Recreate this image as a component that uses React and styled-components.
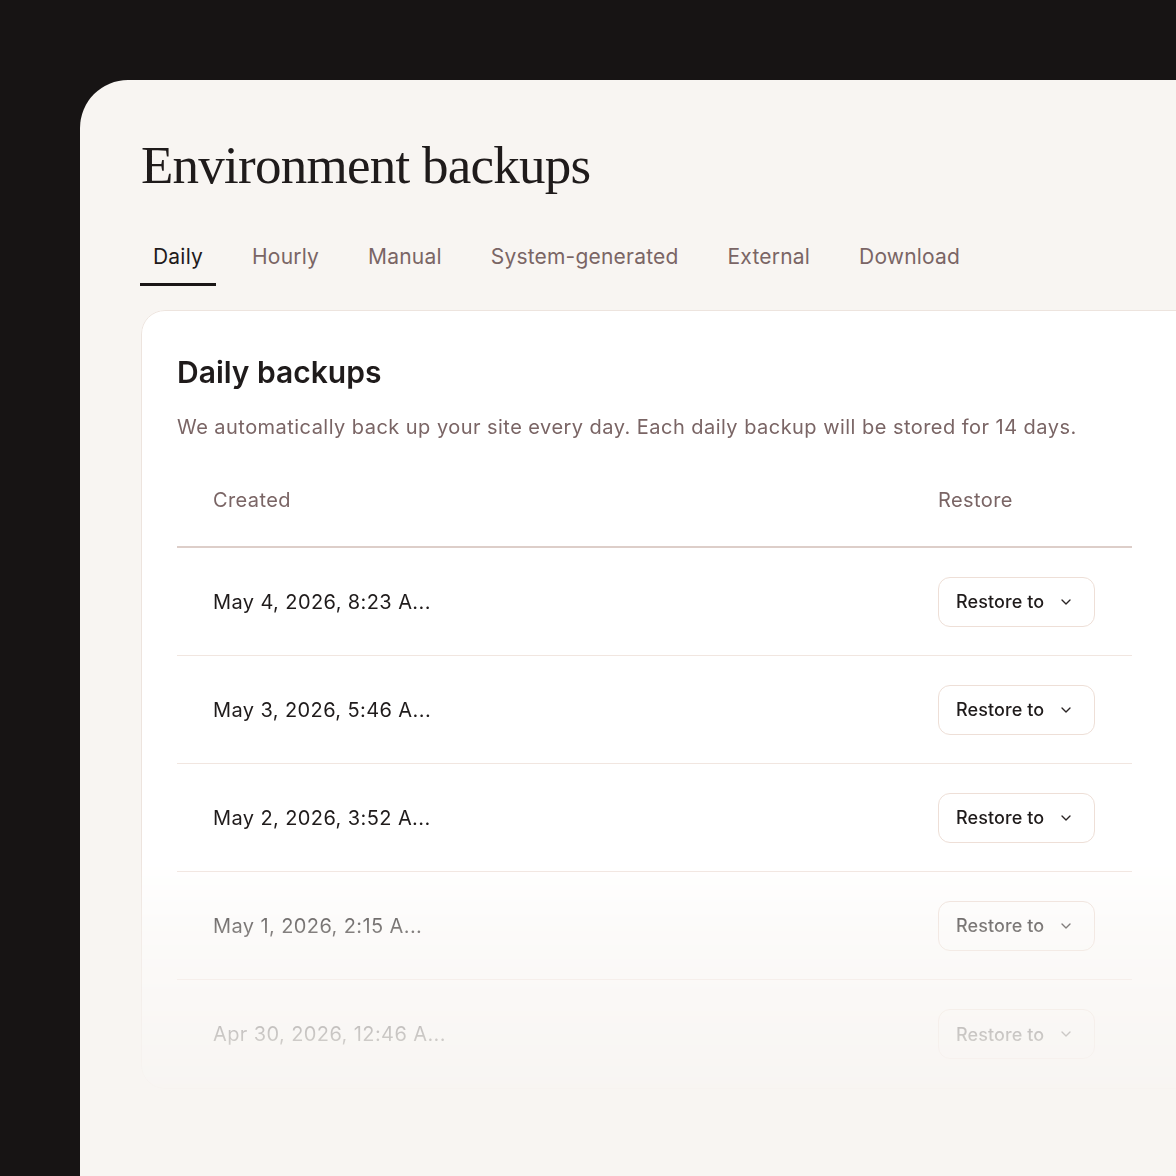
import React from 'react';
import styled, { createGlobalStyle } from 'styled-components';
import { ChevronDown } from 'lucide-react';

const tabs = ['Daily', 'Hourly', 'Manual', 'System-generated', 'External', 'Download'];

const backups = [
  'May 4, 2026, 8:23 A...',
  'May 3, 2026, 5:46 A...',
  'May 2, 2026, 3:52 A...',
  'May 1, 2026, 2:15 A...',
  'Apr 30, 2026, 12:46 A...',
];

const App = () => {
  return (
    <>
      <GlobalStyle />
      <Panel>
        <PageTitle>Environment backups</PageTitle>

        <TabList>
          {tabs.map((tab, i) => (
            <Tab key={tab} $active={i === 0}>{tab}</Tab>
          ))}
        </TabList>

        <Card>
          <CardTitle>Daily backups</CardTitle>
          <CardText>
            We automatically back up your site every day. Each daily backup will be stored for 14 days.
          </CardText>

          <Table>
            <HeadRow>
              <HeadCell>Created</HeadCell>
              <HeadCell>Restore</HeadCell>
            </HeadRow>
            {backups.map((date) => (
              <Row key={date}>
                <DateCell>{date}</DateCell>
                <Cell>
                  <RestoreButton type="button">
                    Restore to <ChevronDown size={16} strokeWidth={2} />
                  </RestoreButton>
                </Cell>
              </Row>
            ))}
          </Table>
        </Card>
      </Panel>
    </>
  );
};

export default App;

const GlobalStyle = createGlobalStyle`
  html, body { margin: 0; padding: 0; }
  body {
    background: #171414;
    font-family: Inter, "Noto Sans", sans-serif;
    overflow: hidden;
  }
`;

const Panel = styled.div`
  margin: 80px 0 0 80px;
  height: 1096px;
  background: #f8f5f2;
  border-top-left-radius: 48px;
  padding: 54px 0 0 61px;
  box-sizing: border-box;
  overflow: hidden;
`;

const PageTitle = styled.h1`
  margin: 0;
  font-family: "Liberation Serif", "DejaVu Serif", serif;
  font-weight: 400;
  font-size: 53px;
  line-height: 62px;
  letter-spacing: -0.75px;
  color: #1f1b1b;
`;

const TabList = styled.div`
  display: flex;
  gap: 23px;
  margin: 49px 0 0 -1px;
`;

const Tab = styled.div`
  padding: 0 13px 14px;
  font-size: 21px;
  line-height: 24px;
  letter-spacing: 0.2px;
  font-weight: 400;
  color: ${({ $active }) => ($active ? '#1f1b1b' : '#7a6565')};
  border-bottom: 3px solid ${({ $active }) => ($active ? '#1a1616' : 'transparent')};
  white-space: nowrap;
`;

const Card = styled.div`
  margin-top: 24px;
  width: 1100px;
  background: #ffffff;
  border: 1px solid #ede4de;
  border-radius: 24px;
  padding: 42px 35px 0;
  box-sizing: border-box;
  -webkit-mask-image: linear-gradient(to bottom, #000 70%, rgba(0,0,0,0.55) 79.6%, rgba(0,0,0,0.2) 93.5%, rgba(0,0,0,0.06) 100%);
  mask-image: linear-gradient(to bottom, #000 70%, rgba(0,0,0,0.55) 79.6%, rgba(0,0,0,0.2) 93.5%, rgba(0,0,0,0.06) 100%);
`;

const CardTitle = styled.h2`
  margin: 0;
  font-size: 30px;
  line-height: 38px;
  font-weight: 600;
  color: #1f1b1b;
`;

const CardText = styled.p`
  margin: 22px 0 0;
  font-size: 20px;
  line-height: 28px;
  letter-spacing: 0.46px;
  color: #7a6565;
`;

const Table = styled.div`
  width: 955px;
  margin-top: 13px;
`;

const HeadRow = styled.div`
  display: grid;
  grid-template-columns: 1fr 230px;
  align-items: center;
  height: 94px;
  border-bottom: 2px solid #ddcec9;
  box-sizing: border-box;
`;

const HeadCell = styled.div`
  padding-left: 36px;
  font-size: 20px;
  letter-spacing: 0.4px;
  color: #7a6565;
`;

const Row = styled.div`
  display: grid;
  grid-template-columns: 1fr 230px;
  align-items: center;
  height: 108px;
  border-bottom: 1px solid #f1e6e0;
  box-sizing: border-box;
  &:last-child { border-bottom: none; }
`;

const Cell = styled.div`
  padding-left: 36px;
`;

const DateCell = styled(Cell)`
  font-size: 20px;
  letter-spacing: 0.4px;
  color: #1f1b1b;
`;

const RestoreButton = styled.button`
  display: inline-flex;
  align-items: center;
  gap: 14px;
  height: 50px;
  padding: 0 20px 0 17px;
  background: #ffffff;
  border: 1px solid #eedfd7;
  border-radius: 12px;
  font-family: Inter, "Noto Sans", sans-serif;
  font-size: 18px;
  letter-spacing: 0.1px;
  font-weight: 500;
  color: #1f1b1b;
  cursor: pointer;
  svg { color: #2a2424; }
`;
